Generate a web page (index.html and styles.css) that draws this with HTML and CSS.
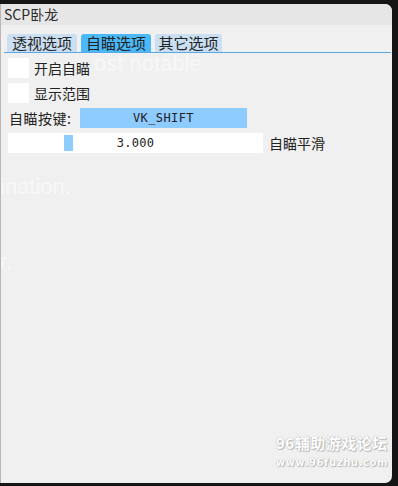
FILE: index.html
```html
<!DOCTYPE html>
<html lang="zh">
<head>
  <meta charset="UTF-8" />
  <title>SCP卧龙</title>
  <link rel="stylesheet" href="styles.css">
</head>
<body>
  <div class="window">
    <div class="titlebar">SCP卧龙</div>
    <div class="content">
      <div class="tabs">
        <div class="tab">透视选项</div>
        <div class="tab active">自瞄选项</div>
        <div class="tab">其它选项</div>
      </div>
      <div class="panel">
        <label class="check-row"><span class="box"></span>开启自瞄</label>
        <label class="check-row"><span class="box"></span>显示范围</label>
        <div class="key-row">
          <span class="key-label">自瞄按键:</span>
          <div class="key-btn">VK_SHIFT</div>
        </div>
        <div class="slider-row">
          <div class="slider">
            <span class="grab"></span>
            <span class="value">3.000</span>
          </div>
          <span class="slider-label">自瞄平滑</span>
        </div>
      </div>
    </div>
    <div class="ghost g1">ost notable</div>
    <div class="ghost g2">ination.</div>
    <div class="ghost g3">r.</div>
    <div class="mark">
      <div class="mark-title">96辅助游戏论坛</div>
      <div class="mark-url">www.96fuzhu.com</div>
    </div>
  </div>
</body>
</html>
```

FILE: styles.css
```css
* { margin: 0; padding: 0; box-sizing: border-box; }
html, body {
  width: 398px;
  height: 486px;
  background: #151515;
  overflow: hidden;
  font-family: "Noto Sans CJK SC", "Noto Sans", sans-serif;
  color: #222;
}
body { padding-top: 4px; }
.window {
  position: relative;
  width: 392px;
  height: 479px;
  background: #f0f0f0;
  border-left: 1px solid #b8b8b8;
  border-radius: 0 7px 7px 0;
  overflow: hidden;
}
.titlebar {
  height: 21px;
  background: #e6e6e6;
  font-size: 14px;
  line-height: 21px;
  padding-left: 3px;
  color: #2a2a2a;
}
.content { padding: 9px 0 0 3px; }
.tabs {
  display: flex;
  gap: 4px;
  padding-left: 3px;
  height: 18px;
}
.tab {
  width: 70px;
  height: 18px;
  background: #cbdff2;
  border-radius: 3px 3px 0 0;
  font-size: 15px;
  line-height: 18px;
  text-align: center;
  color: #222;
}
.tab:last-child { width: 67px; }
.tab.active { background: #4bb9f7; }
.panel {
  border-top: 1px solid #58a8e6;
  width: 387px;
  padding: 5px 0 0 4px;
  display: flex;
  flex-direction: column;
  gap: 5px;
}
.check-row {
  display: flex;
  align-items: center;
  gap: 5px;
  height: 20px;
  font-size: 14px;
}
.box {
  width: 21px;
  height: 20px;
  background: #fff;
}
.key-row {
  display: flex;
  align-items: center;
  height: 20px;
  font-size: 14px;
}
.key-label { width: 72px; padding-left: 1px; letter-spacing: 0.5px; }
.key-btn {
  width: 167px;
  height: 20px;
  background: #8ecbff;
  font-family: "DejaVu Sans Mono", monospace;
  font-size: 12px;
  line-height: 20px;
  text-align: center;
  letter-spacing: 0.4px;
  color: #222;
}
.slider-row {
  display: flex;
  align-items: center;
  gap: 6px;
  height: 20px;
  font-size: 14px;
}
.slider {
  position: relative;
  width: 255px;
  height: 20px;
  background: #fff;
  font-family: "DejaVu Sans Mono", monospace;
  font-size: 12px;
  line-height: 20px;
  text-align: center;
}
.grab {
  position: absolute;
  left: 56px;
  top: 2px;
  width: 9px;
  height: 16px;
  background: #8ecbff;
}
.value { letter-spacing: 0.3px; }
.ghost {
  position: absolute;
  font-family: "Liberation Sans", sans-serif;
  font-size: 22px;
  line-height: 20px;
  color: rgba(255, 255, 255, 0.55);
  pointer-events: none;
}
.g1 { left: 93px; top: 50px; }
.g2 { left: -1px; top: 173px; }
.g3 { left: -1px; top: 248px; }
.mark {
  position: absolute;
  right: 4px;
  top: 429px;
  text-align: center;
  color: #fff;
  text-shadow: 0 0 1px #999, 1px 1px 1px #bbb;
  font-weight: bold;
}
.mark-title { font-size: 15px; line-height: 20px; letter-spacing: 0.5px; }
.mark-url {
  font-family: "DejaVu Sans", sans-serif;
  font-size: 10px;
  line-height: 20px;
  letter-spacing: 0.6px;
}
```
